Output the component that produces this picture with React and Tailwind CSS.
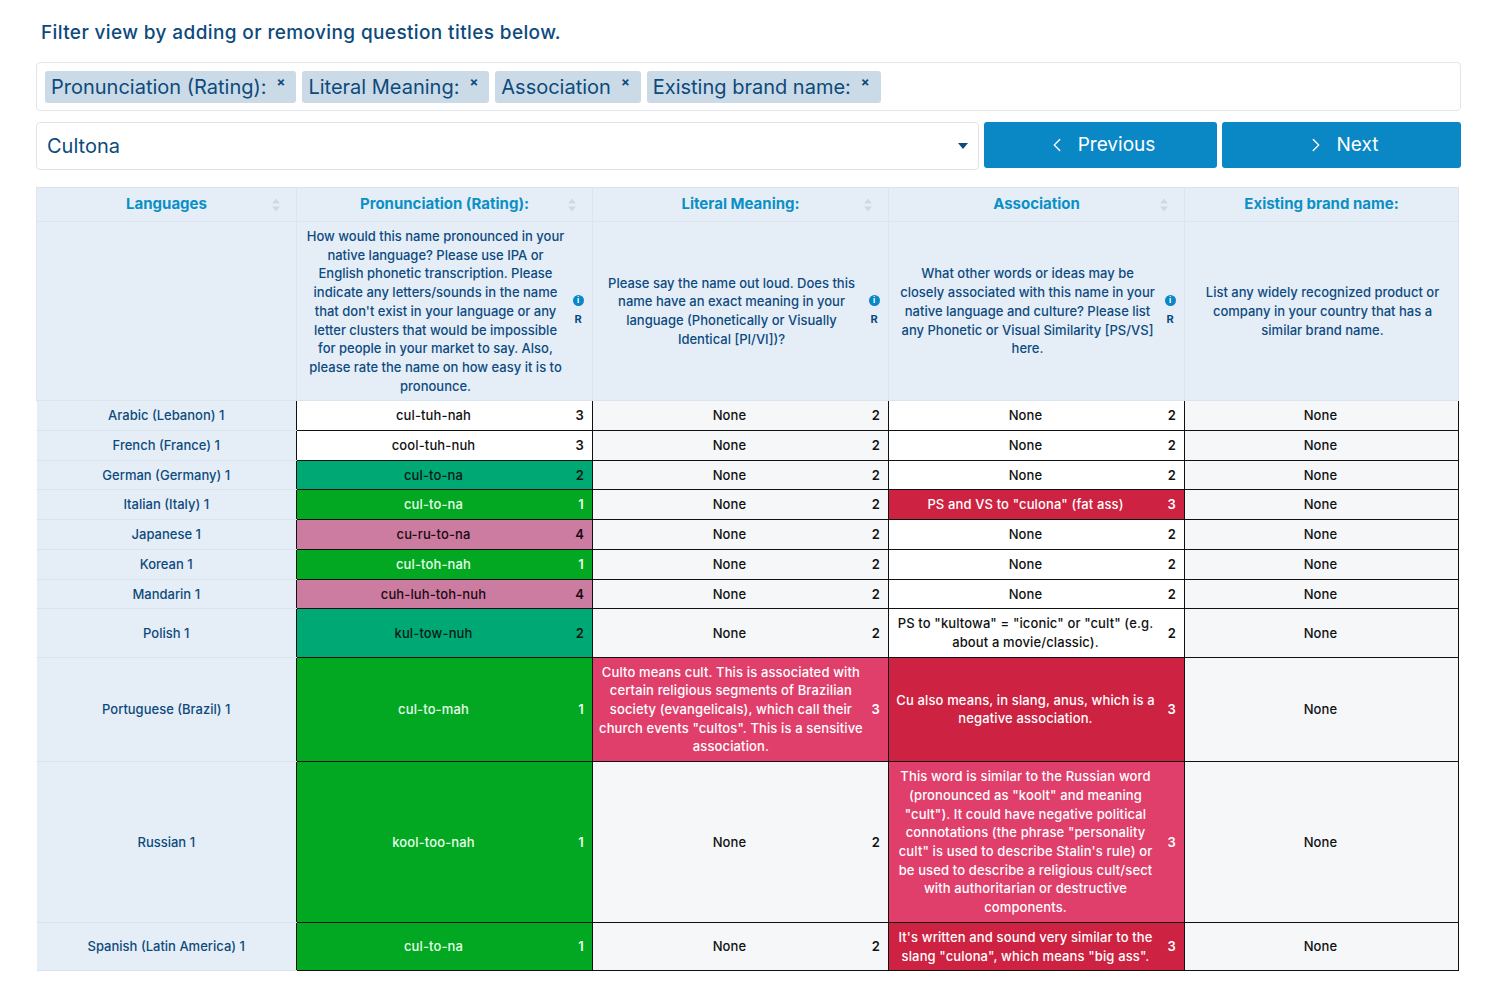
import { ChevronLeft, ChevronRight } from "lucide-react";

const questions = [
  {
    title: "Pronunciation (Rating):",
    lines: [
      "How would this name pronounced in your",
      "native language? Please use IPA or",
      "English phonetic transcription. Please",
      "indicate any letters/sounds in the name",
      "that don't exist in your language or any",
      "letter clusters that would be impossible",
      "for people in your market to say. Also,",
      "please rate the name on how easy it is to",
      "pronounce.",
    ],
    rated: true,
  },
  {
    title: "Literal Meaning:",
    lines: [
      "Please say the name out loud. Does this",
      "name have an exact meaning in your",
      "language (Phonetically or Visually",
      "Identical [PI/VI])?",
    ],
    rated: true,
  },
  {
    title: "Association",
    lines: [
      "What other words or ideas may be",
      "closely associated with this name in your",
      "native language and culture? Please list",
      "any Phonetic or Visual Similarity [PS/VS]",
      "here.",
    ],
    rated: true,
  },
  {
    title: "Existing brand name:",
    lines: [
      "List any widely recognized product or",
      "company in your country that has a",
      "similar brand name.",
    ],
    rated: false,
  },
];

const tone = {
  white: "bg-white text-[#111]",
  gray: "bg-[#f5f7f9] text-[#111]",
  teal: "bg-[#00a874] text-[#0a1a14]",
  green: "bg-[#02a722] text-[#e6ffe9]",
  pink: "bg-[#cc7ca0] text-[#1a0a12]",
  crimson: "bg-[#cd2241] text-white",
  rose: "bg-[#e03f6c] text-white",
};

const none2 = (bg) => ({ lines: ["None"], n: 2, tone: bg });
const brand = { lines: ["None"], tone: "gray" };

const rows = [
  { lang: "Arabic (Lebanon) 1", cells: [{ lines: ["cul-tuh-nah"], n: 3, tone: "white" }, none2("gray"), none2("white"), brand] },
  { lang: "French (France) 1", cells: [{ lines: ["cool-tuh-nuh"], n: 3, tone: "white" }, none2("gray"), none2("white"), brand] },
  { lang: "German (Germany) 1", cells: [{ lines: ["cul-to-na"], n: 2, tone: "teal" }, none2("gray"), none2("white"), brand] },
  { lang: "Italian (Italy) 1", cells: [{ lines: ["cul-to-na"], n: 1, tone: "green" }, none2("gray"), { lines: ["PS and VS to \"culona\" (fat ass)"], n: 3, tone: "crimson" }, brand] },
  { lang: "Japanese 1", cells: [{ lines: ["cu-ru-to-na"], n: 4, tone: "pink" }, none2("gray"), none2("white"), brand] },
  { lang: "Korean 1", cells: [{ lines: ["cul-toh-nah"], n: 1, tone: "green" }, none2("gray"), none2("white"), brand] },
  { lang: "Mandarin 1", cells: [{ lines: ["cuh-luh-toh-nuh"], n: 4, tone: "pink" }, none2("gray"), none2("white"), brand] },
  {
    lang: "Polish 1",
    cells: [
      { lines: ["kul-tow-nuh"], n: 2, tone: "teal" },
      none2("gray"),
      { lines: ["PS to \"kultowa\" = \"iconic\" or \"cult\" (e.g.", "about a movie/classic)."], n: 2, tone: "white" },
      brand,
    ],
  },
  {
    lang: "Portuguese (Brazil) 1",
    cells: [
      { lines: ["cul-to-mah"], n: 1, tone: "green" },
      {
        lines: [
          "Culto means cult. This is associated with",
          "certain religious segments of Brazilian",
          "society (evangelicals), which call their",
          "church events \"cultos\". This is a sensitive",
          "association.",
        ],
        n: 3,
        tone: "rose",
      },
      { lines: ["Cu also means, in slang, anus, which is a", "negative association."], n: 3, tone: "crimson" },
      brand,
    ],
  },
  {
    lang: "Russian 1",
    cells: [
      { lines: ["kool-too-nah"], n: 1, tone: "green" },
      none2("gray"),
      {
        lines: [
          "This word is similar to the Russian word",
          "(pronounced as \"koolt\" and meaning",
          "\"cult\"). It could have negative political",
          "connotations (the phrase \"personality",
          "cult\" is used to describe Stalin's rule) or",
          "be used to describe a religious cult/sect",
          "with authoritarian or destructive",
          "components.",
        ],
        n: 3,
        tone: "rose",
      },
      brand,
    ],
  },
  {
    lang: "Spanish (Latin America) 1",
    cells: [
      { lines: ["cul-to-na"], n: 1, tone: "green" },
      none2("gray"),
      { lines: ["It's written and sound very similar to the", "slang \"culona\", which means \"big ass\"."], n: 3, tone: "crimson" },
      brand,
    ],
  },
];

function Lines({ lines }) {
  return lines.map((l, i) => (
    <span key={i} className="block whitespace-nowrap">
      {l}
    </span>
  ));
}

function SortIcon() {
  return (
    <span className="absolute right-[16px] top-1/2 -translate-y-1/2 flex flex-col gap-[3px]">
      <span className="w-0 h-0 border-x-[4px] border-x-transparent border-b-[5px] border-b-[#cfd9e3]" />
      <span className="w-0 h-0 border-x-[4px] border-x-transparent border-t-[5px] border-t-[#cfd9e3]" />
    </span>
  );
}

function Tag({ label }) {
  return (
    <span className="flex items-center h-[32px] pl-[6px] pr-[11px] rounded-[3px] bg-[#cbdae7] text-[#0d4a7c] text-[20px]">
      {label}
      <span className="ml-[10px] -mt-[8px] text-[13px] font-bold">×</span>
    </span>
  );
}

export default function App() {
  return (
    <div className="min-h-screen bg-white pl-[36px] pr-[39px] pt-[20px] pb-[20px] font-['Inter',sans-serif]">
      <h1 className="pl-[5px] text-[19px] tracking-[0.02em] font-medium text-[#0d4a7c] leading-[26px]">
        Filter view by adding or removing question titles below.
      </h1>

      <div className="mt-[16px] h-[49px] flex items-center gap-[6px] px-[8px] border border-[#e2e6ea] rounded-[4px]">
        {questions.map((q) => (
          <Tag key={q.title} label={q.title} />
        ))}
      </div>

      <div className="mt-[11px] flex gap-[5px]">
        <div className="flex-1 h-[48px] flex items-center justify-between pl-[10px] pr-[10px] border border-[#e0e4e8] rounded-[4px]">
          <span className="text-[20px] text-[#0d4a7c]">Cultona</span>
          <span className="w-0 h-0 border-x-[5px] border-x-transparent border-t-[6px] border-t-[#0d4a7c]" />
        </div>
        <button className="w-[233px] h-[46px] flex items-center justify-center gap-[10px] rounded-[3px] bg-[#0a87c5] text-white text-[19px]">
          <ChevronLeft size={22} strokeWidth={1.5} />
          Previous
        </button>
        <button className="w-[239px] h-[46px] flex items-center justify-center gap-[10px] rounded-[3px] bg-[#0a87c5] text-white text-[19px]">
          <ChevronRight size={22} strokeWidth={1.5} />
          Next
        </button>
      </div>

      <table className="mt-[17px] w-[1422px] table-fixed border-collapse text-[13px]">
        <colgroup>
          <col className="w-[260px]" />
          <col className="w-[296px]" />
          <col className="w-[296px]" />
          <col className="w-[296px]" />
          <col className="w-[274px]" />
        </colgroup>
        <thead>
          <tr className="bg-[#e5eef7]">
            <th className="relative h-[34px] border border-[#dbe5ef] text-[15px] font-bold text-[#0b90c6]">
              Languages
              <SortIcon />
            </th>
            {questions.map((q) => (
              <th key={q.title} className="relative h-[34px] border border-[#dbe5ef] text-[15px] font-bold text-[#0b90c6]">
                {q.title}
                {q.rated && <SortIcon />}
              </th>
            ))}
          </tr>
          <tr className="bg-[#e5eef7]">
            <th className="border border-[#dbe5ef]" />
            {questions.map((q) => (
              <th key={q.title} className="border border-[#dbe5ef] py-[5px] pl-[6px] pr-[4px] font-medium">
                <div className="flex items-center">
                  <p className="flex-1 text-center leading-[18.7px] text-[#0d4a80]">
                    <Lines lines={q.lines} />
                  </p>
                  {q.rated && (
                    <div className="w-[20px] flex flex-col items-center gap-[5px]">
                      <span className="w-[11px] h-[11px] rounded-full bg-[#0a87c5] flex items-center justify-center text-white text-[8px] font-bold leading-none">i</span>
                      <span className="text-[11px] font-bold text-[#0d4a80]">R</span>
                    </div>
                  )}
                </div>
              </th>
            ))}
          </tr>
        </thead>
        <tbody>
          {rows.map((row) => (
            <tr key={row.lang}>
              <td className="bg-[#e5eef7] border-b border-[#d8e3ee] text-center font-medium text-[#0d4a7c] leading-[18.7px] py-[5px]">
                {row.lang}
              </td>
              {row.cells.map((c, i) => (
                <td key={i} className={`border border-[#111] py-[5px] pl-[6px] pr-[8px] font-medium tracking-[0.01em] leading-[18.7px] ${tone[c.tone]}`}>
                  <div className="flex items-center">
                    <span className="flex-1 text-center">
                      <Lines lines={c.lines} />
                    </span>
                    {c.n && <span className="w-[20px] text-right font-semibold">{c.n}</span>}
                  </div>
                </td>
              ))}
            </tr>
          ))}
        </tbody>
      </table>
    </div>
  );
}
